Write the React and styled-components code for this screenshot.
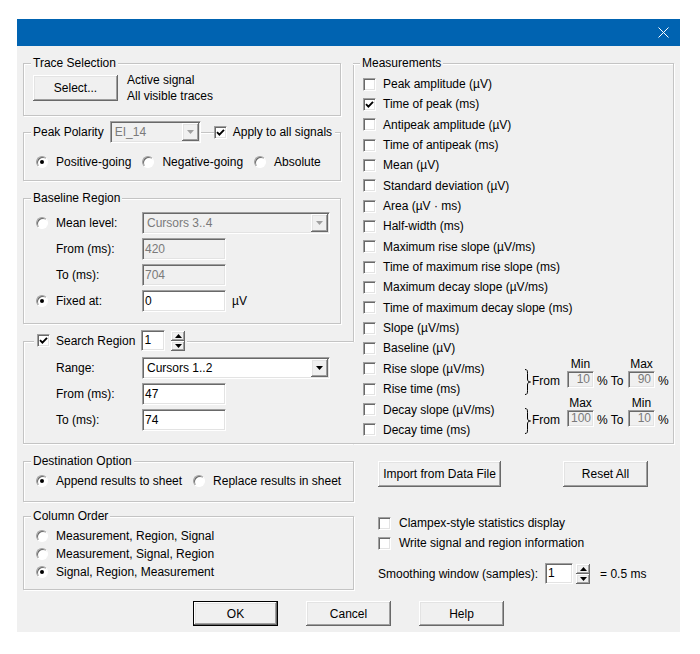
import React from 'react';
import styled, { createGlobalStyle } from 'styled-components';

const GlobalStyle = createGlobalStyle`
  * { box-sizing: border-box; }
  body {
    margin: 0;
    background: #fff;
    font-family: "Liberation Sans", Arial, sans-serif;
    font-size: 12px;
    color: #000;
  }
`;

const sunken = `
  border: 1px solid;
  border-color: #a0a0a0 #fff #fff #a0a0a0;
  box-shadow: inset 1px 1px 0 #696969, inset -1px -1px 0 #e3e3e3;
`;

const raised = `
  box-shadow: inset -1px -1px 0 #696969, inset 1px 1px 0 #fff,
    inset -2px -2px 0 #a0a0a0, inset 2px 2px 0 #e3e3e3;
`;

const Window = styled.div`
  width: 663px;
  margin: 19px 0 0 17px;
  background: #f0f0f0;
  display: flex;
  flex-direction: column;
`;

const TitleBar = styled.div`
  height: 27px;
  background: #0063b1;
  display: flex;
  align-items: center;
  justify-content: flex-end;
  padding-right: 11px;
`;

const Body = styled.div`
  padding: 0 6px 6px;
  display: flex;
  flex-direction: column;
`;

const Columns = styled.div`
  display: grid;
  grid-template-columns: 330px 321px;
  margin-top: 17px;
`;

const Stack = styled.div`
  display: flex;
  flex-direction: column;
  align-items: flex-start;
`;

const Group = styled.div`
  width: ${(p) => p.$w || 318}px;
  height: ${(p) => p.$h}px;
  margin-top: ${(p) => p.$mt || 0}px;
  border: 1px solid #c4c4c4;
  box-shadow: inset 1px 1px 0 #fff, 1px 1px 0 #fff;
  display: flex;
  flex-direction: column;
  align-items: flex-start;
`;

const SearchGroup = styled(Group)`
  border-right: none;
  box-shadow: inset 1px 1px 0 #fff, 0 1px 0 #fff;
`;

/* the left edge stops where the search region's top line runs into it */
const MeasureGroup = styled(Group)`
  width: 321px;
  border-left: none;
  box-shadow: inset 0 1px 0 #fff, 1px 1px 0 #fff;
  background:
    linear-gradient(#c4c4c4, #c4c4c4) 0 0 / 1px 278px no-repeat,
    linear-gradient(#fff, #fff) 1px 1px / 1px 277px no-repeat;
  align-items: stretch;
`;

const Legend = styled.div`
  display: flex;
  align-items: center;
  height: ${(p) => p.$h || 14}px;
  margin-top: ${(p) => p.$mt ?? -8}px;
  margin-left: ${(p) => p.$ml ?? 7}px;
  align-self: flex-start;
`;

const LegendText = styled.span`
  background: #f0f0f0;
  line-height: 14px;
  padding: 0 ${(p) => p.$pr ?? 2}px 0 2px;
  white-space: nowrap;
`;

const LegendPart = styled.div`
  display: flex;
  align-items: center;
  gap: ${(p) => p.$gap || 6}px;
  background: #f0f0f0;
  height: 100%;
  padding: 0 ${(p) => p.$pr || 2}px 0 ${(p) => p.$pl || 0}px;
  margin-left: ${(p) => p.$ml || 0}px;
  white-space: nowrap;
`;

const Button = styled.div`
  width: ${(p) => p.$w || 85}px;
  height: ${(p) => p.$h || 26}px;
  background: #f0f0f0;
  display: flex;
  align-items: center;
  justify-content: center;
  flex: none;
  ${raised}
  ${(p) =>
    p.$default &&
    `box-shadow: inset 0 0 0 1px #000, inset -2px -2px 0 #696969, inset 2px 2px 0 #fff,
      inset -3px -3px 0 #a0a0a0, inset 3px 3px 0 #e3e3e3;`}
`;

const TraceRow = styled.div`
  display: flex;
  align-items: center;
  gap: 9px;
  margin: 2px 0 0 9px;
  line-height: 16px;
`;

const CheckBox = styled.span`
  width: 13px;
  height: 13px;
  flex: none;
  background: #fff;
  ${sunken}
  display: flex;
  align-items: center;
  justify-content: center;
`;

const RadioDot = styled.span`
  width: 12px;
  height: 12px;
  flex: none;
  border-radius: 50%;
  border: 1px solid;
  border-color: #a0a0a0 #fff #fff #a0a0a0;
  background: #fff;
  box-shadow: inset 1px 1px 0 #696969;
  display: flex;
  align-items: center;
  justify-content: center;
  &::after {
    content: '';
    width: 4px;
    height: 4px;
    border-radius: 50%;
    background: ${(p) => (p.$on ? '#000' : 'transparent')};
  }
`;

const Option = styled.div`
  display: flex;
  align-items: center;
  gap: ${(p) => p.$gap || 8}px;
  height: ${(p) => p.$h || 16}px;
  margin-top: ${(p) => p.$mt || 0}px;
  white-space: nowrap;
`;

const OptionRow = styled.div`
  display: flex;
  gap: 11px;
  margin: ${(p) => p.$mt}px 0 0 12px;
`;

const OptionList = styled.div`
  display: flex;
  flex-direction: column;
  gap: 2px;
  margin: ${(p) => p.$mt}px 0 0 12px;
`;

const FormGrid = styled.div`
  display: grid;
  grid-template-columns: 20px 86px auto;
  grid-auto-rows: 22px;
  row-gap: 4px;
  align-items: center;
  margin: ${(p) => p.$mt}px 0 0 12px;
`;

const Label = styled.span`
  grid-column: 2;
  white-space: nowrap;
`;

const Combo = styled.div`
  width: ${(p) => p.$w}px;
  height: ${(p) => p.$h || 22}px;
  display: flex;
  padding: 1px;
  background: ${(p) => (p.$off ? '#f0f0f0' : '#fff')};
  color: ${(p) => (p.$off ? '#7a7a7a' : '#000')};
  ${sunken}
`;

const ComboText = styled.span`
  flex: 1;
  padding-left: 3px;
  line-height: 18px;
`;

const DropButton = styled.span`
  width: 17px;
  background: #f0f0f0;
  ${raised}
  display: flex;
  align-items: center;
  justify-content: center;
`;

const Field = styled.div`
  width: ${(p) => p.$w}px;
  height: ${(p) => p.$h || 22}px;
  flex: none;
  padding: 0 ${(p) => (p.$right ? 3 : 2)}px;
  line-height: ${(p) => (p.$h || 22) - 2}px;
  text-align: ${(p) => (p.$right ? 'right' : 'left')};
  background: ${(p) => (p.$off ? '#f0f0f0' : '#fff')};
  color: ${(p) => (p.$off ? '#7a7a7a' : '#000')};
  ${sunken}
`;

const FieldWithUnit = styled.div`
  display: flex;
  align-items: center;
  gap: 6px;
`;

const Spin = styled.div`
  width: 14px;
  height: 20px;
  display: flex;
  flex-direction: column;
  flex: none;
`;

const SpinButton = styled.span`
  flex: 1;
  background: #f0f0f0;
  ${raised}
  display: flex;
  align-items: center;
  justify-content: center;
`;

const MeasureBody = styled.div`
  flex: 1;
  display: grid;
  margin-top: 4px;
`;

const MeasureList = styled.div`
  grid-area: 1 / 1;
  display: grid;
  grid-auto-rows: 20.35px;
  align-content: start;
  padding-left: 10px;
`;

const RangeColumn = styled.div`
  grid-area: 1 / 1;
  justify-self: end;
  align-self: end;
  display: flex;
  flex-direction: column;
  gap: 8px;
  padding: 0 8px 16px 0;
`;

const RangeGrid = styled.div`
  display: grid;
  grid-template-columns: 8px 35px 27px 34px 27px 10px;
  grid-template-rows: 14px 17px;
  align-items: center;
  white-space: nowrap;
`;

const BraceCell = styled.div`
  grid-column: 1;
  grid-row: 1 / span 2;
  align-self: end;
  height: 26px;
  margin-bottom: -7px;
`;

const RangeLabel = styled.span`
  grid-row: 1;
  grid-column: ${(p) => p.$col};
  text-align: center;
  line-height: 14px;
`;

const RangeText = styled.span`
  grid-row: 2;
  grid-column: ${(p) => p.$col};
  padding-left: ${(p) => p.$pl || 0}px;
  line-height: 14px;
  padding-top: 3px;
`;

const RangeField = styled(Field)`
  grid-row: 2;
  grid-column: ${(p) => p.$col};
`;

const Lower = styled.div`
  display: grid;
  grid-template-columns: 330px 321px;
  margin-top: 17px;
`;

const Side = styled.div`
  display: flex;
  flex-direction: column;
  padding-left: 25px;
`;

const SideButtons = styled.div`
  display: flex;
  gap: 62px;
`;

const SmoothRow = styled.div`
  display: flex;
  align-items: center;
  gap: 3px;
  height: 21px;
  margin-top: 12px;
  white-space: nowrap;
`;

const SmoothValue = styled(Field)`
  margin-left: 4px;
`;

const SmoothNote = styled.span`
  margin-left: 7px;
`;

const Footer = styled.div`
  display: flex;
  justify-content: center;
  gap: 28px;
  margin-top: 11px;
`;

const Arrow = ({ up, color = '#000' }) => (
  <svg width="7" height="4" viewBox="0 0 7 4">
    <polygon points={up ? '0,4 7,4 3.5,0' : '0,0 7,0 3.5,4'} fill={color} />
  </svg>
);

const Check = ({ on }) => (
  <CheckBox>
    {on && (
      <svg width="9" height="9" viewBox="0 0 9 9">
        <path d="M1 4.2 L3.4 6.6 L8 1.8" fill="none" stroke="#000" strokeWidth="1.9" />
      </svg>
    )}
  </CheckBox>
);

const Brace = () => (
  <svg width="8" height="26" viewBox="0 0 8 26">
    <path
      d="M1 0.5 C3.5 0.5 3.5 2 3.5 4.5 L3.5 10 C3.5 12 4.5 13 6.5 13 C4.5 13 3.5 14 3.5 16 L3.5 21.5 C3.5 24 3.5 25.5 1 25.5"
      fill="none"
      stroke="#000"
      strokeWidth="1"
    />
  </svg>
);

const Spinner = () => (
  <Spin>
    <SpinButton>
      <Arrow up />
    </SpinButton>
    <SpinButton>
      <Arrow />
    </SpinButton>
  </Spin>
);

const measurements = [
  ['Peak amplitude (µV)', false],
  ['Time of peak (ms)', true],
  ['Antipeak amplitude (µV)', false],
  ['Time of antipeak (ms)', false],
  ['Mean (µV)', false],
  ['Standard deviation (µV)', false],
  ['Area (µV · ms)', false],
  ['Half-width (ms)', false],
  ['Maximum rise slope (µV/ms)', false],
  ['Time of maximum rise slope (ms)', false],
  ['Maximum decay slope (µV/ms)', false],
  ['Time of maximum decay slope (ms)', false],
  ['Slope (µV/ms)', false],
  ['Baseline (µV)', false],
  ['Rise slope (µV/ms)', false],
  ['Rise time (ms)', false],
  ['Decay slope (µV/ms)', false],
  ['Decay time (ms)', false],
];

const RangeGroup = ({ labels, from, to }) => (
  <RangeGrid>
    <BraceCell>
      <Brace />
    </BraceCell>
    <RangeLabel $col={3}>{labels[0]}</RangeLabel>
    <RangeLabel $col={5}>{labels[1]}</RangeLabel>
    <RangeText $col={2}>From</RangeText>
    <RangeField $col={3} $w={27} $h={17} $off $right>
      {from}
    </RangeField>
    <RangeText $col={4} $pl={3}>
      % To
    </RangeText>
    <RangeField $col={5} $w={27} $h={17} $off $right>
      {to}
    </RangeField>
    <RangeText $col={6} $pl={3}>
      %
    </RangeText>
  </RangeGrid>
);

const App = () => (
  <>
    <GlobalStyle />
    <Window>
      <TitleBar>
        <svg width="11" height="11" viewBox="0 0 11 11">
          <path d="M0.5 0.5 L10.5 10.5 M10.5 0.5 L0.5 10.5" stroke="#fff" strokeWidth="1" />
        </svg>
      </TitleBar>
      <Body>
        <Columns>
          <Stack>
            <Group $h={53}>
              <Legend>
                <LegendText>Trace Selection</LegendText>
              </Legend>
              <TraceRow>
                <Button>Select...</Button>
                <div>
                  Active signal
                  <br />
                  All visible traces
                </div>
              </TraceRow>
            </Group>

            <Group $h={49} $mt={16}>
              <Legend $h={22} $mt={-12}>
                <LegendText $pr={6}>Peak Polarity</LegendText>
                <Combo $w={91} $off>
                  <ComboText>EI_14</ComboText>
                  <DropButton>
                    <Arrow color="#a0a0a0" />
                  </DropButton>
                </Combo>
                <LegendPart $ml={13} $pr={3}>
                  <Check on />
                  Apply to all signals
                </LegendPart>
              </Legend>
              <OptionRow $mt={11}>
                <Option>
                  <RadioDot $on />
                  Positive-going
                </Option>
                <Option>
                  <RadioDot />
                  Negative-going
                </Option>
                <Option>
                  <RadioDot />
                  Absolute
                </Option>
              </OptionRow>
            </Group>

            <Group $h={126} $mt={17}>
              <Legend>
                <LegendText>Baseline Region</LegendText>
              </Legend>
              <FormGrid $mt={7}>
                <RadioDot />
                <Label>Mean level:</Label>
                <Combo $w={188} $off>
                  <ComboText>Cursors 3..4</ComboText>
                  <DropButton>
                    <Arrow color="#a0a0a0" />
                  </DropButton>
                </Combo>
                <Label>From (ms):</Label>
                <Field $w={84} $off>
                  420
                </Field>
                <Label>To (ms):</Label>
                <Field $w={84} $off>
                  704
                </Field>
                <RadioDot $on />
                <Label>Fixed at:</Label>
                <FieldWithUnit>
                  <Field $w={84}>0</Field>
                  µV
                </FieldWithUnit>
              </FormGrid>
            </Group>

            <SearchGroup $w={330} $h={103} $mt={17}>
              <Legend $h={21} $mt={-12} $ml={10}>
                <LegendPart $pl={3} $pr={2}>
                  <Check on />
                  Search Region
                  <Field $w={24} $h={21}>
                    1
                  </Field>
                  <Spinner />
                </LegendPart>
              </Legend>
              <FormGrid $mt={6}>
                <Label>Range:</Label>
                <Combo $w={188}>
                  <ComboText>Cursors 1..2</ComboText>
                  <DropButton>
                    <Arrow />
                  </DropButton>
                </Combo>
                <Label>From (ms):</Label>
                <Field $w={84}>47</Field>
                <Label>To (ms):</Label>
                <Field $w={84}>74</Field>
              </FormGrid>
            </SearchGroup>
          </Stack>

          <MeasureGroup $h={381}>
            <Legend>
              <LegendText>Measurements</LegendText>
            </Legend>
            <MeasureBody>
              <MeasureList>
                {measurements.map(([name, on]) => (
                  <Option key={name} $gap={7} $h={20}>
                    <Check on={on} />
                    {name}
                  </Option>
                ))}
              </MeasureList>
              <RangeColumn>
                <RangeGroup labels={['Min', 'Max']} from="10" to="90" />
                <RangeGroup labels={['Max', 'Min']} from="100" to="10" />
              </RangeColumn>
            </MeasureBody>
          </MeasureGroup>
        </Columns>

        <Lower>
          <Stack>
            <Group $w={331} $h={41}>
              <Legend>
                <LegendText>Destination Option</LegendText>
              </Legend>
              <OptionRow $mt={5}>
                <Option>
                  <RadioDot $on />
                  Append results to sheet
                </Option>
                <Option>
                  <RadioDot />
                  Replace results in sheet
                </Option>
              </OptionRow>
            </Group>
            <Group $w={331} $h={74} $mt={14}>
              <Legend>
                <LegendText>Column Order</LegendText>
              </Legend>
              <OptionList $mt={5}>
                <Option>
                  <RadioDot />
                  Measurement, Region, Signal
                </Option>
                <Option>
                  <RadioDot />
                  Measurement, Signal, Region
                </Option>
                <Option>
                  <RadioDot $on />
                  Signal, Region, Measurement
                </Option>
              </OptionList>
            </Group>
          </Stack>

          <Side>
            <SideButtons>
              <Button $w={123}>Import from Data File</Button>
              <Button>Reset All</Button>
            </SideButtons>
            <Option $mt={28}>
              <Check />
              Clampex-style statistics display
            </Option>
            <Option $mt={4}>
              <Check />
              Write signal and region information
            </Option>
            <SmoothRow>
              Smoothing window (samples):
              <SmoothValue $w={28} $h={21}>
                1
              </SmoothValue>
              <Spinner />
              <SmoothNote>= 0.5 ms</SmoothNote>
            </SmoothRow>
          </Side>
        </Lower>

        <Footer>
          <Button $h={25} $default>
            OK
          </Button>
          <Button $h={25}>Cancel</Button>
          <Button $h={25}>Help</Button>
        </Footer>
      </Body>
    </Window>
  </>
);

export default App;
